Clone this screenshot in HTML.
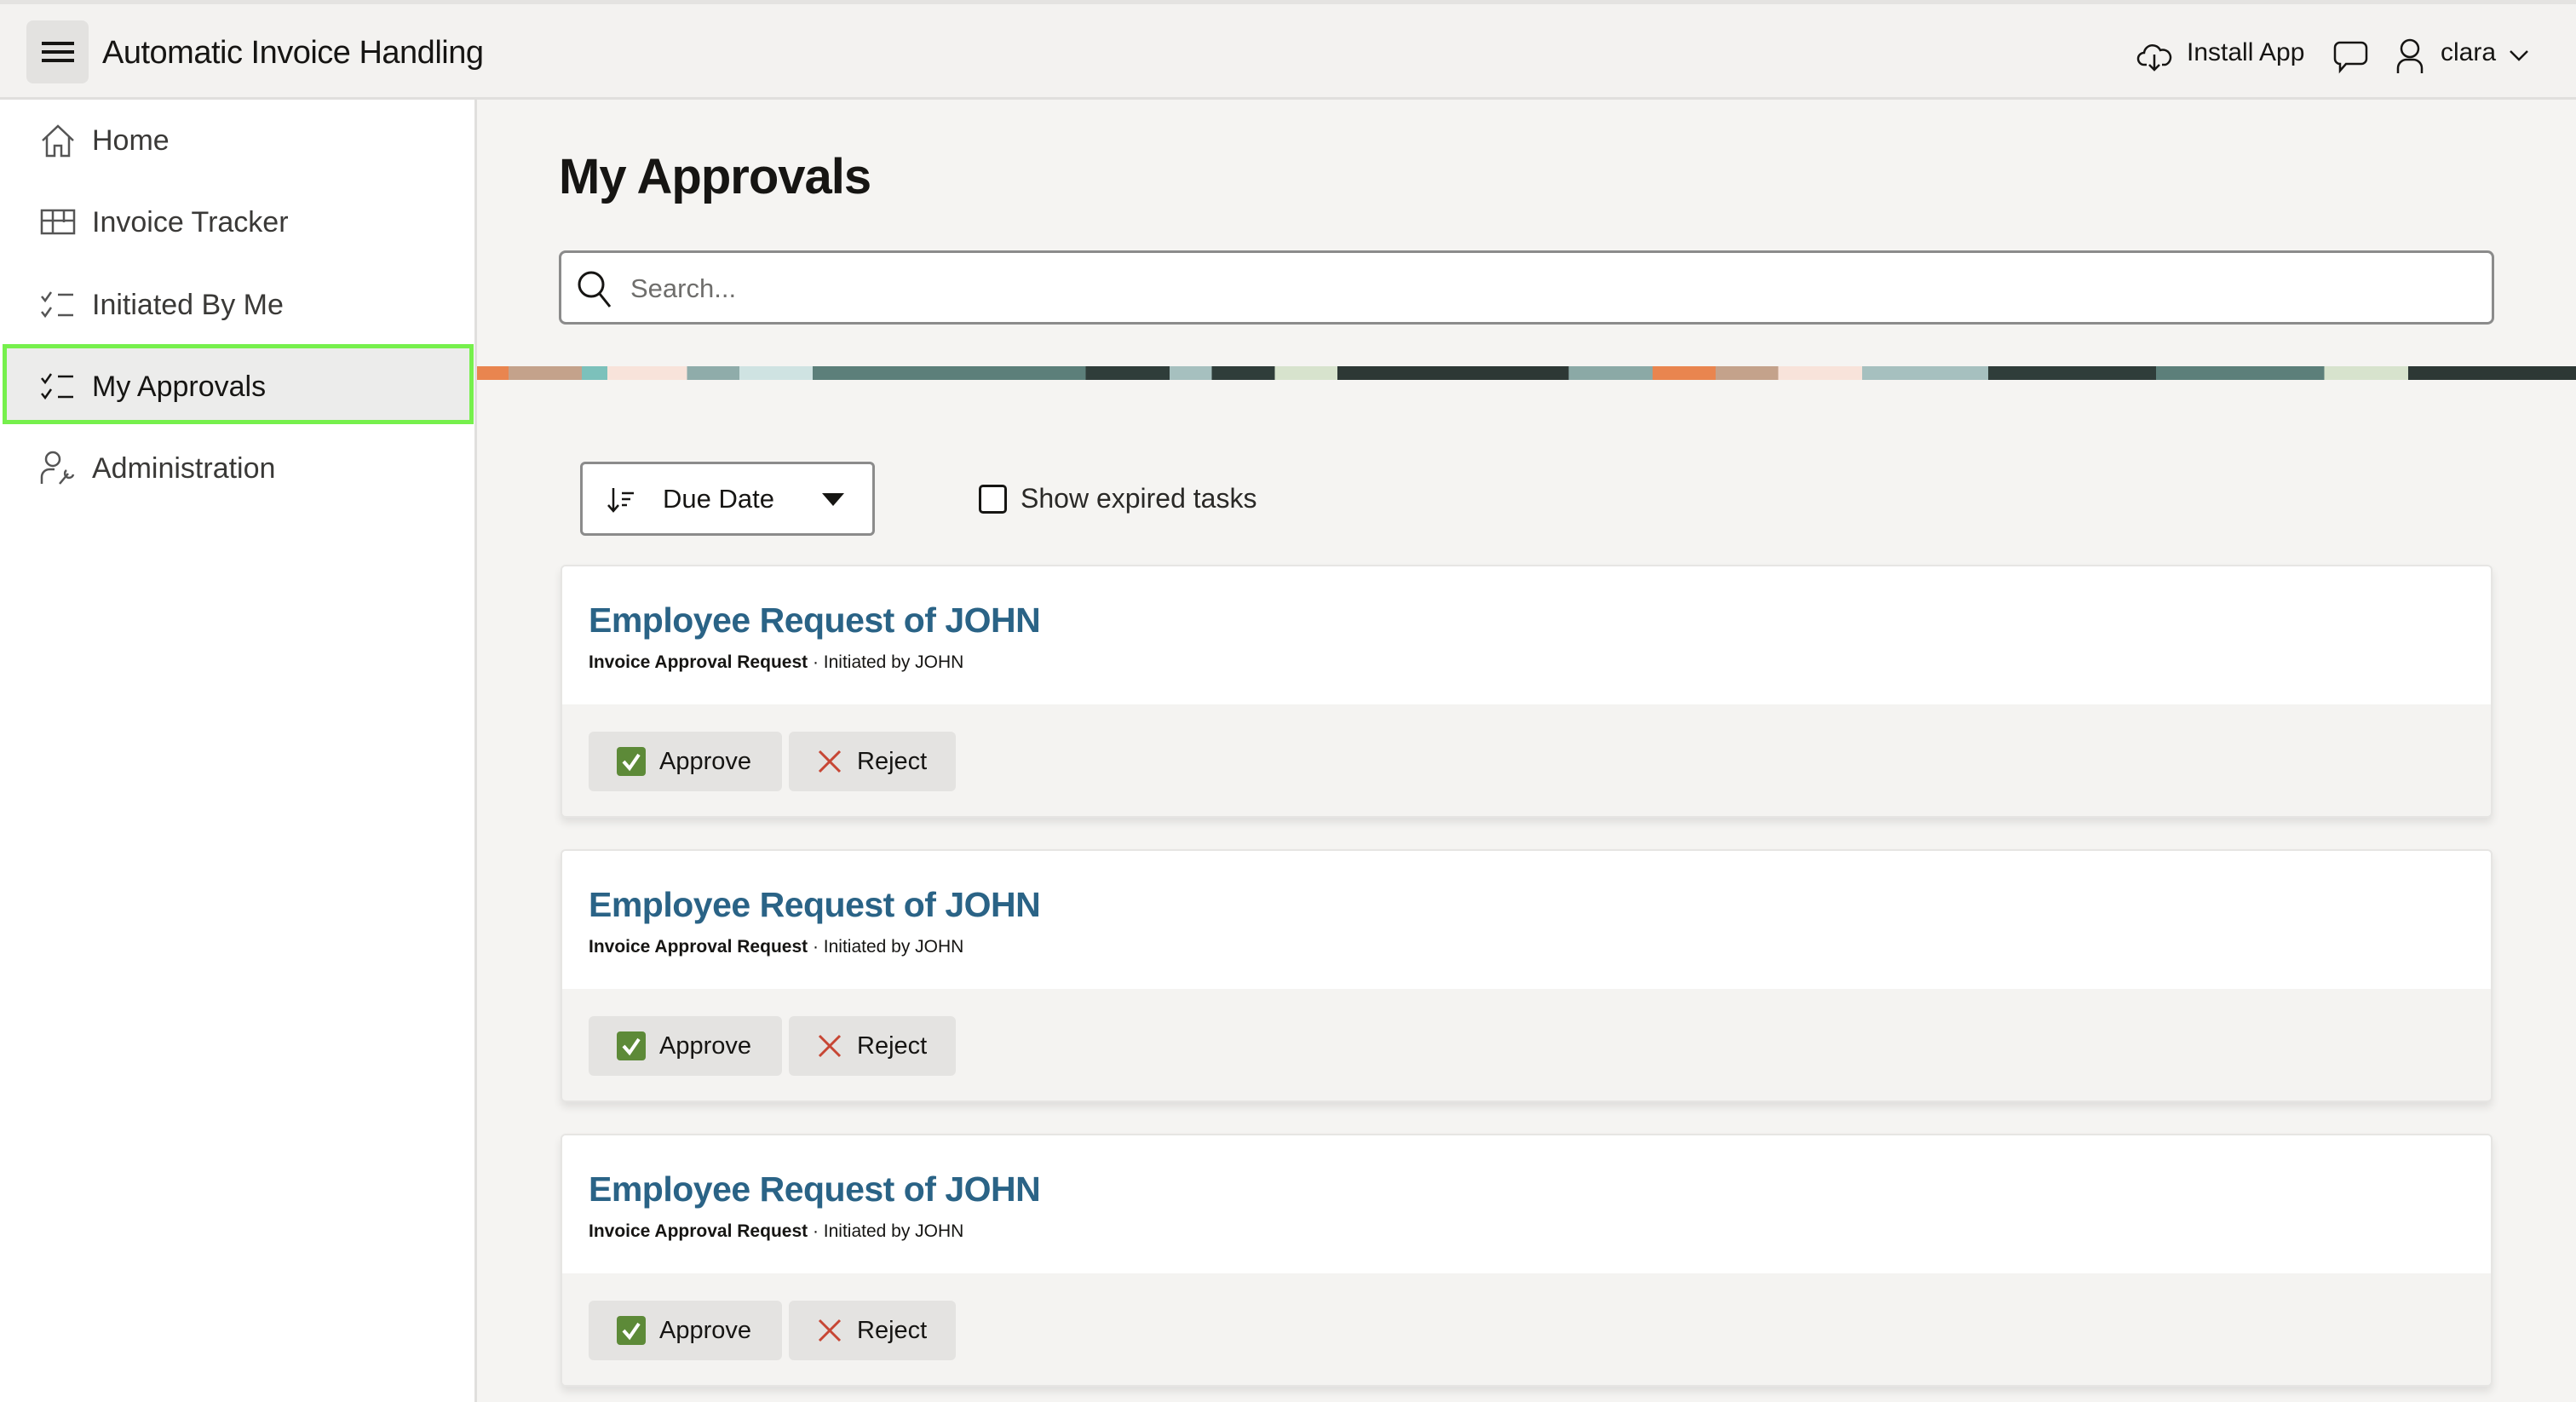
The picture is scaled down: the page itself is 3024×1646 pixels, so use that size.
<!DOCTYPE html>
<html><head><meta charset="utf-8"><style>
*{box-sizing:border-box;margin:0;padding:0}
body{width:3024px;height:1646px;overflow:hidden;background:#f5f4f2;font-family:"Liberation Sans",sans-serif;color:#161513;position:relative}
.top{position:absolute;left:0;top:0;width:3024px;height:117px;background:#f3f2f0;border-top:5px solid #e4e3e1;border-bottom:3px solid #e0dfdd}
.ham{position:absolute;left:31px;top:19px;width:73px;height:74px;background:#e3e2e0;border-radius:8px}
.ham i{position:absolute;left:18px;width:38px;height:4px;background:#161513}
.title{position:absolute;left:120px;top:36px;font-size:38px;letter-spacing:-0.5px}
.side{position:absolute;left:0;top:117px;width:560px;height:1529px;background:#fff;border-right:3px solid #e0dfdd}
.nav{position:absolute;left:46px;font-size:34px;color:#3a3937;display:flex;align-items:center}
.nav svg{width:44px;height:44px;margin-right:18px}
.sel{position:absolute;left:3px;top:287px;width:553px;height:94px;background:#ececeb;border:5px solid #76f04c}
h1{position:absolute;left:656px;top:174px;font-size:58px;font-weight:bold;letter-spacing:-1px}
.search{position:absolute;left:656px;top:294px;width:2272px;height:87px;background:#fff;border:3px solid #8b8b8b;border-radius:8px}
.search span{position:absolute;left:81px;top:24px;font-size:31px;color:#6f6e6c}
.banner{position:absolute;left:560px;top:430px;width:2464px;height:16px;background:linear-gradient(90deg,#e9854f 0 1.5%,#c4a28b 1.5% 5%,#7cc1bb 5% 6.2%,#f8e3da 6.2% 10%,#8facaa 10% 12.5%,#cfe3e2 12.5% 16%,#5c7f7a 16% 29%,#2f3d3a 29% 33%,#a6c0bf 33% 35%,#2f3d3a 35% 38%,#d7e3cd 38% 41%,#2d3835 41% 52%,#8ba9a6 52% 56%,#e9854f 56% 59%,#c4a28b 59% 62%,#f8e3da 62% 66%,#a6c0bf 66% 72%,#2f3d3a 72% 80%,#5c7f7a 80% 88%,#d7e3cd 88% 92%,#2d3835 92% 100%)}
.sort{position:absolute;left:681px;top:542px;width:346px;height:87px;background:#fff;border:3px solid #8b8b8b;border-radius:6px}
.sort span{position:absolute;left:94px;top:23px;font-size:31px}
.chk{position:absolute;left:1149px;top:569px;width:33px;height:34px;border:3px solid #161513;border-radius:5px;background:#fff}
.chkl{position:absolute;left:1198px;top:567px;font-size:32px;color:#2a2927}
.card{position:absolute;left:658px;width:2268px;height:297px;background:#f4f3f1;border:2px solid #e6e5e3;border-radius:6px;box-shadow:0 6px 10px rgba(0,0,0,.09);overflow:hidden}
.card .hd{height:162px;background:#fff}
.card h2{position:absolute;left:31px;top:40px;font-size:41px;font-weight:bold;color:#2a6386;letter-spacing:-0.5px}
.card .sub{position:absolute;left:31px;top:101px;font-size:21px;color:#161513}
.btn{position:absolute;top:194px;height:70px;background:#e4e3e1;border-radius:6px;font-size:29px;display:flex;align-items:center}
</style></head><body>
<div class="top">
<div class="ham"><i style="top:25px"></i><i style="top:35px"></i><i style="top:45px"></i></div>
<div class="title">Automatic Invoice Handling</div>
<svg style="position:absolute;left:2508px;top:41px" width="42" height="42" viewBox="0 0 42 42" fill="none" stroke="#161513" stroke-width="2.5"><path d="M12 30H9a7 7 0 0 1 0-14 10 10 0 0 1 19-3 8 8 0 0 1 6 17h-4"/><path d="M21 18v18M15 30l6 6 6-6"/></svg>
<div style="position:absolute;left:2567px;top:40px;font-size:30px">Install App</div>
<svg style="position:absolute;left:2738px;top:42px" width="42" height="40" viewBox="0 0 42 40" fill="none" stroke="#161513" stroke-width="2.5"><path d="M8 3h26a6 6 0 0 1 6 6v13a6 6 0 0 1-6 6H16l-7 8v-8a6 6 0 0 1-6-6V9a6 6 0 0 1 5-6z"/></svg>
<svg style="position:absolute;left:2813px;top:40px" width="32" height="42" viewBox="0 0 32 42" fill="none" stroke="#161513" stroke-width="2.5"><circle cx="16" cy="12" r="10"/><path d="M2 41v-6a10 10 0 0 1 10-10h8a10 10 0 0 1 10 10v6"/></svg>
<div style="position:absolute;left:2865px;top:40px;font-size:30px">clara</div>
<svg style="position:absolute;left:2945px;top:52px" width="24" height="16" viewBox="0 0 24 16" fill="none" stroke="#161513" stroke-width="2.5"><path d="M2 3l10 10 10-10"/></svg>
</div>
<div class="side">
<div class="sel"></div>
<div class="nav" style="top:26px"><svg viewBox="0 0 44 44" fill="none" stroke="#555" stroke-width="2.5"><path d="M4 22L22 5l18 17M9 18v22h9V28h8v12h9V18"/></svg>Home</div>
<div class="nav" style="top:122px"><svg viewBox="0 0 44 44" fill="none" stroke="#555" stroke-width="2.5"><rect x="3" y="8" width="38" height="27"/><path d="M3 20h38M16 8v27M29 8v14"/></svg>Invoice Tracker</div>
<div class="nav" style="top:219px"><svg viewBox="0 0 44 44" fill="none" stroke="#555" stroke-width="2.5"><path d="M3 12l4 5 7-10M3 30l4 5 7-10M22 10h18M22 34h18"/></svg>Initiated By Me</div>
<div class="nav" style="top:315px;color:#161513"><svg viewBox="0 0 44 44" fill="none" stroke="#161513" stroke-width="2.5"><path d="M3 12l4 5 7-10M3 30l4 5 7-10M22 10h18M22 34h18"/></svg>My Approvals</div>
<div class="nav" style="top:411px"><svg viewBox="0 0 44 44" fill="none" stroke="#555" stroke-width="2.5"><circle cx="16" cy="11" r="8"/><path d="M3 40v-8a9 9 0 0 1 9-9h6M24 40l10-12M32 24a5 5 0 1 0 8 5"/></svg>Administration</div>
</div>
<h1>My Approvals</h1>
<div class="search"><svg style="position:absolute;left:18px;top:20px" width="44" height="46" viewBox="0 0 44 46" fill="none" stroke="#161513" stroke-width="3"><circle cx="17" cy="17" r="14"/><path d="M27 28l12 15"/></svg><span>Search...</span></div>
<div class="banner"></div>
<div class="sort"><svg style="position:absolute;left:28px;top:26px" width="36" height="32" viewBox="0 0 36 32" fill="none" stroke="#161513" stroke-width="2.5"><path d="M8 2v27M2 22l6 7 6-7M18 8h14M18 15h10M18 22h6"/></svg><span>Due Date</span><svg style="position:absolute;left:281px;top:34px" width="26" height="16" viewBox="0 0 26 16"><path d="M0 0h26L13 15z" fill="#161513"/></svg></div>
<div class="chk"></div><div class="chkl">Show expired tasks</div>

<div class="card" style="top:663px"><div class="hd"></div><h2>Employee Request of JOHN</h2><div class="sub"><b>Invoice Approval Request</b> · Initiated by JOHN</div>
<div class="btn" style="left:31px;width:227px"><svg style="margin-left:33px;margin-right:16px" width="34" height="34" viewBox="0 0 34 34"><rect width="34" height="34" rx="4" fill="#5d8a38"/><path d="M8 17l7 8 11-16" fill="none" stroke="#fff" stroke-width="4"/></svg>Approve</div>
<div class="btn" style="left:266px;width:196px"><svg style="margin-left:34px;margin-right:18px" width="28" height="28" viewBox="0 0 28 28"><path d="M2 2l24 24M26 2L2 26" stroke="#c74634" stroke-width="3"/></svg>Reject</div></div>

<div class="card" style="top:997px"><div class="hd"></div><h2>Employee Request of JOHN</h2><div class="sub"><b>Invoice Approval Request</b> · Initiated by JOHN</div>
<div class="btn" style="left:31px;width:227px"><svg style="margin-left:33px;margin-right:16px" width="34" height="34" viewBox="0 0 34 34"><rect width="34" height="34" rx="4" fill="#5d8a38"/><path d="M8 17l7 8 11-16" fill="none" stroke="#fff" stroke-width="4"/></svg>Approve</div>
<div class="btn" style="left:266px;width:196px"><svg style="margin-left:34px;margin-right:18px" width="28" height="28" viewBox="0 0 28 28"><path d="M2 2l24 24M26 2L2 26" stroke="#c74634" stroke-width="3"/></svg>Reject</div></div>

<div class="card" style="top:1331px"><div class="hd"></div><h2>Employee Request of JOHN</h2><div class="sub"><b>Invoice Approval Request</b> · Initiated by JOHN</div>
<div class="btn" style="left:31px;width:227px"><svg style="margin-left:33px;margin-right:16px" width="34" height="34" viewBox="0 0 34 34"><rect width="34" height="34" rx="4" fill="#5d8a38"/><path d="M8 17l7 8 11-16" fill="none" stroke="#fff" stroke-width="4"/></svg>Approve</div>
<div class="btn" style="left:266px;width:196px"><svg style="margin-left:34px;margin-right:18px" width="28" height="28" viewBox="0 0 28 28"><path d="M2 2l24 24M26 2L2 26" stroke="#c74634" stroke-width="3"/></svg>Reject</div></div>
</body></html>
